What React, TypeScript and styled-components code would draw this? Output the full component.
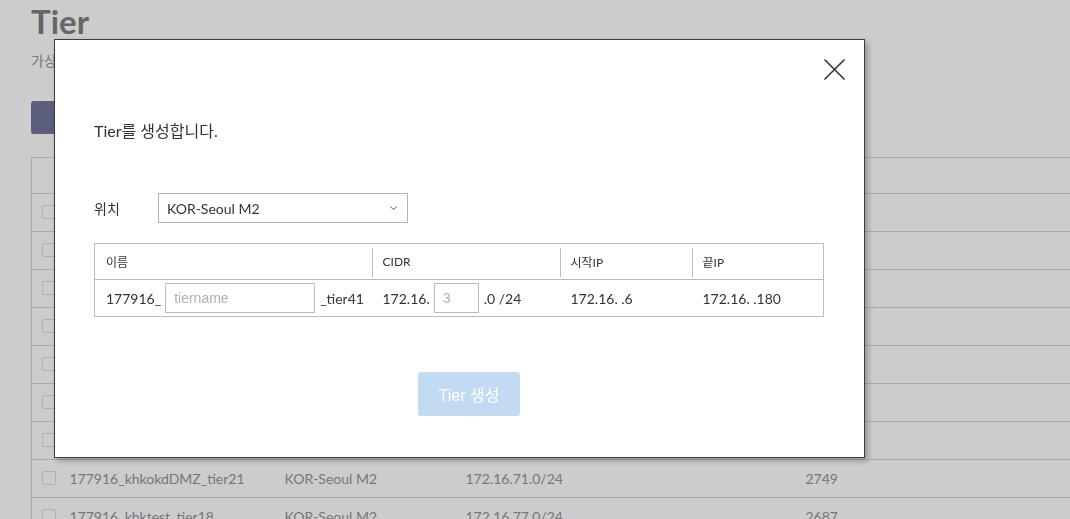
import styled, { createGlobalStyle } from "styled-components";

const GlobalStyle = createGlobalStyle`
  html, body {
    margin: 0;
    padding: 0;
    background: #fff;
    font-family: "Lato", "Noto Sans CJK KR", sans-serif;
    overflow: hidden;
  }
  * {
    box-sizing: border-box;
  }
`;

const Page = styled.main`
  padding: 2px 0 0 31px;
  height: 519px;
  overflow: hidden;
`;

const PageTitle = styled.h1`
  margin: 0;
  font-size: 33px;
  line-height: 1.2;
  font-weight: 700;
  color: #808080;
`;

const PageDesc = styled.p`
  margin: 9px 0 0;
  font-size: 14px;
  line-height: 20px;
  color: #959595;
`;

const PageButton = styled.button`
  margin-top: 30px;
  width: 110px;
  height: 33px;
  border: none;
  border-radius: 3px;
  background: #72779b;
  color: #fff;
  font-family: inherit;
  font-size: 14px;
`;

const ListTable = styled.table`
  margin-top: 23px;
  width: calc(100% + 10px);
  border-collapse: collapse;
  border-top: 1px solid #d5d5d5;
  border-left: 1px solid #d5d5d5;
  font-size: 14px;
  color: #959595;

  th {
    height: 36px;
    text-align: left;
    font-weight: 400;
  }
  td {
    height: 38px;
    border-top: 1px solid #d5d5d5;
    padding: 0;
  }
`;

const CheckCell = styled.td`
  width: 38px;
  padding-left: 10px !important;
`;

const Check = styled.span`
  display: block;
  width: 14px;
  height: 14px;
  border: 1px solid #dcdcdc;
  border-radius: 2px;
  background: #fff;
`;

const Backdrop = styled.div`
  position: fixed;
  inset: 0;
  background: rgba(0, 0, 0, 0.2);
`;

const Modal = styled.section`
  position: fixed;
  left: 54px;
  top: 39px;
  width: 811px;
  height: 419px;
  background: #fff;
  border: 1px solid #3a3a3a;
  box-shadow: 3px 3px 6px rgba(0, 0, 0, 0.28);
  padding: 79px 40px 0 39px;
  display: flex;
  flex-direction: column;
  color: #333;
`;

const CloseButton = styled.button`
  position: absolute;
  top: 18px;
  right: 18px;
  width: 23px;
  height: 23px;
  padding: 0;
  border: none;
  background: transparent;
  cursor: pointer;
`;

const ModalHeading = styled.h2`
  margin: 0;
  font-size: 16px;
  font-weight: 400;
  line-height: 24px;
  color: #333;
`;

const FieldRow = styled.div`
  margin-top: 50px;
  display: flex;
  align-items: center;
`;

const FieldLabel = styled.span`
  width: 64px;
  font-size: 14px;
  color: #333;
  margin-top: -1px;
`;

const Select = styled.div`
  width: 250px;
  height: 30px;
  border: 1px solid #b5b5b5;
  display: flex;
  align-items: center;
  justify-content: space-between;
  padding: 0 9px 0 8px;
  font-size: 14px;
  color: #333;
`;

const FormTable = styled.table`
  margin-top: 20px;
  width: 730px;
  border-collapse: collapse;
  border: 1px solid #bbb;
  table-layout: fixed;
  color: #333;
`;

const HeadCell = styled.th<{ $divider?: boolean }>`
  position: relative;
  height: 36px;
  padding: 0 0 0 11px;
  text-align: left;
  font-size: 12px;
  font-weight: 400;
  border-bottom: 1px solid #bbb;

  &::before {
    content: "";
    display: ${(p) => (p.$divider ? "block" : "none")};
    position: absolute;
    left: 0;
    top: 4px;
    bottom: 2px;
    border-left: 1px solid #bbb;
  }
`;

const BodyCell = styled.td`
  height: 37px;
  padding: 0 0 0 11px;
  font-size: 14px;
  white-space: nowrap;
`;

const Inline = styled.div`
  display: flex;
  align-items: center;
`;

const TextInput = styled.input<{ $width: number }>`
  width: ${(p) => p.$width}px;
  height: 30px;
  margin: 0 5px 0 4px;
  border: 1px solid #bbb;
  padding: 0 8px;
  font-family: "Liberation Sans", "Noto Sans CJK KR", sans-serif;
  font-size: 14px;
  color: #333;
  outline: none;

  &::placeholder {
    color: #b0b0b0;
  }
`;

const Footer = styled.div`
  margin-top: 55px;
  display: flex;
  justify-content: center;
  padding-left: 20px;
`;

const SubmitButton = styled.button`
  width: 102px;
  height: 44px;
  border: none;
  border-radius: 3px;
  background: #c3dbf2;
  color: #fff;
  font-family: "Liberation Sans", "Noto Sans CJK KR", sans-serif;
  font-size: 16px;
`;

const rows = [
  ["177916_khkweb_tier40", "KOR-Seoul M2", "172.16.2.0/24", "2810"],
  ["177916_khkapp_tier39", "KOR-Seoul M2", "172.16.8.0/24", "2806"],
  ["177916_khkdb_tier36", "KOR-Seoul M2", "172.16.11.0/24", "2801"],
  ["177916_khkmgmt_tier33", "KOR-Seoul M2", "172.16.20.0/24", "2794"],
  ["177916_khkdev_tier30", "KOR-Seoul M2", "172.16.31.0/24", "2788"],
  ["177916_khkstg_tier27", "KOR-Seoul M2", "172.16.45.0/24", "2772"],
  ["177916_khkbak_tier24", "KOR-Seoul M2", "172.16.60.0/24", "2760"],
  ["177916_khkokdDMZ_tier21", "KOR-Seoul M2", "172.16.71.0/24", "2749"],
  ["177916_khktest_tier18", "KOR-Seoul M2", "172.16.77.0/24", "2687"],
];

export default function App() {
  return (
    <>
      <GlobalStyle />
      <Page>
        <PageTitle>Tier</PageTitle>
        <PageDesc>가상 네트워크의 Tier를 관리합니다.</PageDesc>
        <PageButton>Tier 생성</PageButton>
        <ListTable>
          <thead>
            <tr>
              <th style={{ width: 38 }} />
              <th style={{ width: 215 }}>이름</th>
              <th style={{ width: 181 }}>위치</th>
              <th style={{ width: 340 }}>CIDR</th>
              <th>ID</th>
            </tr>
          </thead>
          <tbody>
            {rows.map((r) => (
              <tr key={r[0]}>
                <CheckCell>
                  <Check />
                </CheckCell>
                <td>{r[0]}</td>
                <td>{r[1]}</td>
                <td>{r[2]}</td>
                <td>{r[3]}</td>
              </tr>
            ))}
          </tbody>
        </ListTable>
      </Page>
      <Backdrop />
      <Modal>
        <CloseButton aria-label="닫기">
          <svg width="23" height="23" viewBox="0 0 23 23">
            <path d="M1.5 1.5 L21.5 21.5 M21.5 1.5 L1.5 21.5" stroke="#333" strokeWidth="1.6" fill="none" />
          </svg>
        </CloseButton>
        <ModalHeading>Tier를 생성합니다.</ModalHeading>
        <FieldRow>
          <FieldLabel>위치</FieldLabel>
          <Select>
            <span>KOR-Seoul M2</span>
            <svg width="9" height="6" viewBox="0 0 9 6">
              <path d="M1 1.5 L4.5 4.5 L8 1.5" stroke="#666" strokeWidth="1" fill="none" />
            </svg>
          </Select>
        </FieldRow>
        <FormTable>
          <colgroup>
            <col style={{ width: 277 }} />
            <col style={{ width: 188 }} />
            <col style={{ width: 132 }} />
            <col />
          </colgroup>
          <thead>
            <tr>
              <HeadCell>이름</HeadCell>
              <HeadCell $divider>CIDR</HeadCell>
              <HeadCell $divider>시작IP</HeadCell>
              <HeadCell $divider>끝IP</HeadCell>
            </tr>
          </thead>
          <tbody>
            <tr>
              <BodyCell>
                <Inline>
                  177916_
                  <TextInput $width={150} placeholder="tiername" />
                  _tier41
                </Inline>
              </BodyCell>
              <BodyCell>
                <Inline>
                  172.16.
                  <TextInput $width={45} placeholder="3" />
                  .0 /24
                </Inline>
              </BodyCell>
              <BodyCell>172.16. .6</BodyCell>
              <BodyCell>172.16. .180</BodyCell>
            </tr>
          </tbody>
        </FormTable>
        <Footer>
          <SubmitButton>Tier 생성</SubmitButton>
        </Footer>
      </Modal>
    </>
  );
}
